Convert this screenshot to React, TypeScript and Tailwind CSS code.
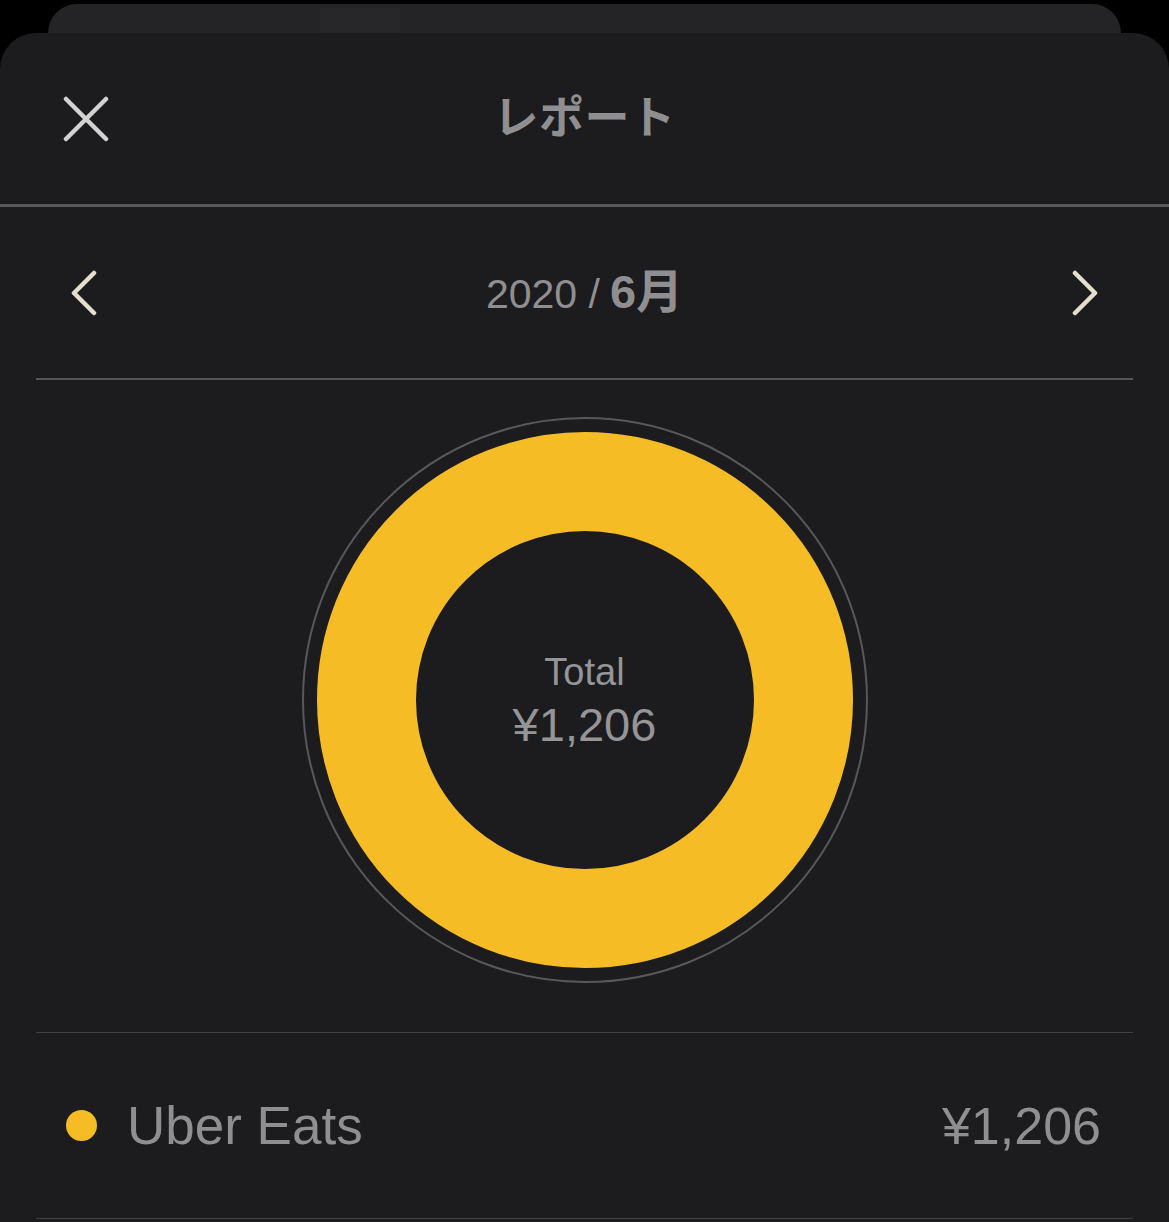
import React from "react";

const font = { fontFamily: '"Liberation Sans", "Noto Sans CJK JP", sans-serif' };

function CloseIcon() {
  return (
    <svg width="46" height="46" viewBox="0 0 46 46" fill="none">
      <path d="M3 3L43 43M43 3L3 43" stroke="#d2d2d2" strokeWidth="4.5" strokeLinecap="round" />
    </svg>
  );
}

function Chevron({ dir }: { dir: "left" | "right" }) {
  return (
    <svg width="28" height="46" viewBox="0 0 28 46" fill="none">
      <path
        d={dir === "left" ? "M24 3L4 23L24 43" : "M4 3L24 23L4 43"}
        stroke="#e4dfcc"
        strokeWidth="4.5"
        strokeLinecap="round"
        strokeLinejoin="round"
      />
    </svg>
  );
}

function Donut() {
  return (
    <svg width="568" height="568" viewBox="0 0 568 568">
      <circle cx="284" cy="284" r="282" fill="none" stroke="#58585a" strokeWidth="2" />
      <circle cx="284" cy="284" r="218.5" fill="none" stroke="#f6bc26" strokeWidth="99" />
    </svg>
  );
}

export default function App() {
  return (
    <div className="h-[1222px] w-full overflow-hidden bg-black flex flex-col" style={font}>
      {/* sheet behind */}
      <div className="mx-[48px] mt-[4px] h-[29px] shrink-0 rounded-t-[30px] bg-[#242426] relative">
        <div className="absolute left-[272px] top-[4px] h-[25px] w-[80px] bg-[#272729]" />
      </div>

      <div className="flex-1 rounded-t-[36px] bg-[#1c1c1e] flex flex-col">
        {/* header */}
        <div className="grid h-[174px] shrink-0 grid-cols-[1fr_auto_1fr] items-center border-b-[3px] border-[#58585a] px-[63px]">
          <div className="flex">
            <CloseIcon />
          </div>
          <h1 className="text-[45px] font-bold tracking-[0.5px] text-[#8f8f91]">レポート</h1>
          <div />
        </div>

        {/* month nav */}
        <div className="mx-[36px] flex h-[173px] shrink-0 items-center justify-between border-b-2 border-[#555557] px-[34px]">
          <Chevron dir="left" />
          <div className="flex items-baseline text-[#8f8f91]">
            <span className="text-[41px]">2020 /</span>
            <span className="ml-[10px] text-[47px] font-bold">6月</span>
          </div>
          <Chevron dir="right" />
        </div>

        {/* chart */}
        <div className="mx-[36px] flex shrink-0 justify-center border-b border-[#414143] pt-[36px] pb-[48px]">
          <div className="relative">
            <Donut />
            <div className="absolute inset-0 flex flex-col items-center justify-center text-[#959597]">
              <span className="text-[38px] leading-none">Total</span>
              <span className="mt-[10px] text-[47px] leading-none">¥1,206</span>
            </div>
          </div>
        </div>

        {/* list */}
        <div className="mx-[36px] flex h-[186px] shrink-0 items-center border-b border-[#414143] pl-[30px] pr-[32px]">
          <span className="h-[31px] w-[31px] rounded-full bg-[#f6bc26]" />
          <span className="ml-[30px] text-[53px] text-[#8f8f91]">Uber Eats</span>
          <span className="ml-auto text-[52px] text-[#8f8f91]">¥1,206</span>
        </div>
      </div>
    </div>
  );
}
